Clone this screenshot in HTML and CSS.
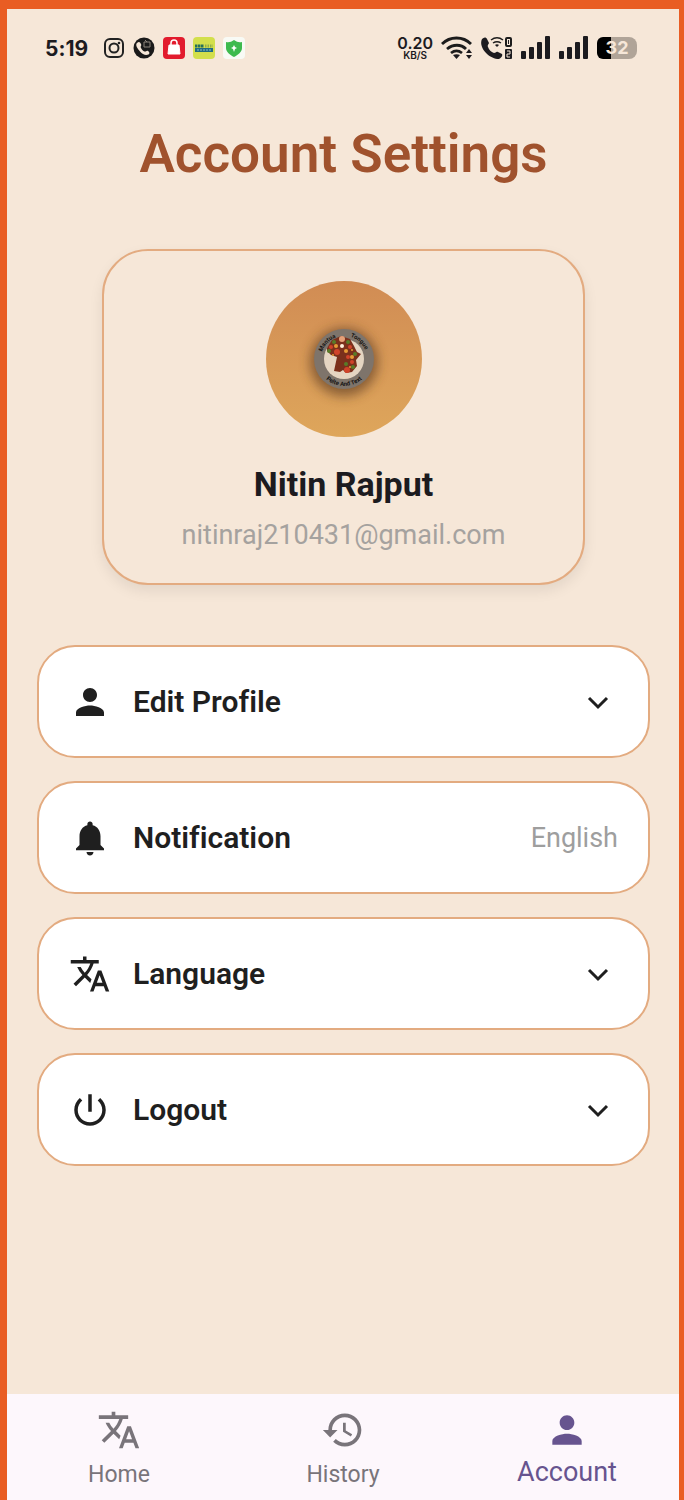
FILE: index.html
```html
<!DOCTYPE html>
<html lang="en">
<head>
    <meta charset="UTF-8">
    <meta name="viewport" content="width=device-width, initial-scale=1.0">
    <title>Account Settings</title>
    <link rel="stylesheet" href="styles.css">
</head>
<body>

<!-- shared icons -->
<svg class="sprite" aria-hidden="true">
    <symbol id="icon-person" viewBox="0 0 24 24">
        <path d="M12 12c2.210 0 4-1.790 4-4s-1.790-4-4-4-4 1.790-4 4 1.790 4 4 4zm0 2c-2.670 0-8 1.340-8 4v2h16v-2c0-2.660-5.330-4-8-4z"/>
    </symbol>
    <symbol id="icon-bell" viewBox="0 0 24 24">
        <path d="M12 22c1.100 0 2-.9 2-2h-4c0 1.100.89 2 2 2zm6-6v-5c0-3.070-1.640-5.640-4.500-6.320V4c0-.83-.67-1.500-1.500-1.500s-1.500.67-1.500 1.500v.68C7.630 5.360 6 7.920 6 11v5l-2 2v1h16v-1l-2-2z"/>
    </symbol>
    <symbol id="icon-translate" viewBox="0 0 24 24">
        <path d="M12.870 15.070l-2.540-2.510.03-.03c1.740-1.940 2.980-4.170 3.710-6.530H17V4h-7V2H8v2H1v1.990h11.170C11.500 7.920 10.440 9.750 9 11.350 8.070 10.320 7.300 9.190 6.690 8h-2c.73 1.630 1.730 3.170 2.980 4.560l-5.090 5.020L4 19l5-5 3.110 3.110.76-2.040zM18.500 10h-2L12 22h2l1.120-3h4.750L21 22h2l-4.500-12zm-2.620 7l1.620-4.330L19.120 17h-3.240z"/>
    </symbol>
    <symbol id="icon-power" viewBox="0 0 24 24">
        <path d="M13 3h-2v10h2V3zm4.830 2.170l-1.420 1.420C17.990 7.860 19 9.810 19 12c0 3.870-3.130 7-7 7s-7-3.130-7-7c0-2.190 1.010-4.140 2.580-5.420L6.170 5.170C4.230 6.820 3 9.260 3 12c0 4.970 4.030 9 9 9s9-4.030 9-9c0-2.740-1.230-5.180-3.170-6.830z"/>
    </symbol>
    <symbol id="icon-history" viewBox="0 0 24 24">
        <path d="M13 3c-4.970 0-9 4.030-9 9H1l3.890 3.890.07.14L9 12H6c0-3.870 3.130-7 7-7s7 3.130 7 7-3.130 7-7 7c-1.930 0-3.680-.79-4.940-2.060l-1.420 1.420C8.270 19.990 10.510 21 13 21c4.970 0 9-4.030 9-9s-4.030-9-9-9zm-1 5v5l4.280 2.540.72-1.210-3.500-2.080V8H12z"/>
    </symbol>
    <symbol id="icon-chevron" viewBox="0 0 24 24">
        <path d="M3 8l9 9 9-9" fill="none" stroke="currentColor" stroke-width="3"/>
    </symbol>
    <symbol id="icon-signal" viewBox="0 0 30 24">
        <rect x="0" y="15" width="5" height="8" rx="1"/>
        <rect x="8" y="11" width="5" height="12" rx="1"/>
        <rect x="16" y="6" width="5" height="17" rx="1"/>
        <rect x="24" y="0" width="5" height="23" rx="1"/>
    </symbol>
</svg>

<div class="app">
    <header class="status-bar">
        <div class="status-left">
            <span class="clock">5:19</span>
            <svg class="app-icon" viewBox="0 0 24 24" aria-hidden="true">
                <rect x="3" y="3" width="18" height="18" rx="5" fill="none" stroke="#222" stroke-width="2"/>
                <circle cx="12" cy="12" r="4.500" fill="none" stroke="#222" stroke-width="2"/>
                <circle cx="17" cy="7" r="1.300" fill="#222"/>
            </svg>
            <svg class="app-icon" viewBox="0 0 24 24" aria-hidden="true">
                <circle cx="12" cy="12" r="10.500" fill="#1a1a1a"/>
                <path d="M5 7c2-2 3-1 4 1s-1 2 0 4 2 3 3.500 3.500 2-1.500 3.500-.5 2 2.500.5 3.500c-3 1-6 0-8.500-3S3 9 5 7z" fill="#f6e7d8"/>
                <path d="M12 6h6v5h-6zM13 4l2 2" fill="none" stroke="#8d857c"/>
            </svg>
            <svg class="app-icon" viewBox="0 0 24 24" aria-hidden="true">
                <rect x="1" y="1" width="22" height="22" rx="4" fill="#e21b2d"/>
                <path d="M7 9h10l1 9H6z" fill="#fff" stroke="#fff" stroke-linejoin="round"/>
                <path d="M9 10V7c0-4 6-4 6 0v3" fill="none" stroke="#fff" stroke-width="1.500"/>
            </svg>
            <svg class="app-icon" viewBox="0 0 24 24" aria-hidden="true">
                <rect x="1" y="1" width="22" height="22" rx="4" fill="#d3df4c"/>
                <path d="M3 10h9" stroke="#27705a" stroke-width="3" stroke-dasharray="2.500 .5"/>
                <path d="M13 10h8" stroke="#91ad4b" stroke-width="3" stroke-dasharray="1.500 1"/>
                <rect x="3" y="12" width="18" height="4" fill="#206b82"/>
                <path d="M5 14h14" stroke="#8dbec0" stroke-dasharray="2 1"/>
            </svg>
            <svg class="app-icon" viewBox="0 0 24 24" aria-hidden="true">
                <rect x="1" y="1" width="22" height="22" rx="4" fill="#f8faf5"/>
                <path d="M12 4q4 3 8 2v6c0 4-4 7-8 9-4-2-8-5-8-9V6q4 1 8-2z" fill="#3dba4e"/>
                <path d="M12 9l1 2 2 1-2 1-1 3-1-3-2-1 2-1z" fill="#fff"/>
            </svg>
        </div>
        <div class="status-right">
            <span class="speed"><span class="speed-value">0.20</span><span class="speed-unit">KB/S</span></span>
            <svg class="wifi" viewBox="0 0 32 24" aria-hidden="true">
                <g fill="none" stroke="#1c1c1c" stroke-width="2.800">
                    <path d="M1 8c8-8 21-8 29 0M6 13c6-5 14-5 19 0M10 17c4-3 7-3 11 0"/>
                </g>
                <path d="M12 19c2-1 5-1 7 0l-3.500 4z"/>
                <path d="M25 17l3-4 3 4zM25 19h6l-3 4z"/>
            </svg>
            <svg class="call" viewBox="0 0 32 24" aria-hidden="true">
                <path d="M1 3c2-2 4-2 5 0l2 4c0 1-2 2-1 4 1 3 3 5 6 6 2 0 2-2 4-1l4 2c1 2-1 4-3 5C8 23-3 11 1 3z"/>
                <g fill="none" stroke="#1c1c1c" stroke-width="1.500">
                    <path d="M10 4c4-3 8-3 12 0M12 7c3-2 5-2 8 0"/>
                    <rect x="25" y="2" width="5" height="8" rx="1" stroke-width="2"/>
                </g>
                <path d="M27 4h1v4h-1zM14 9c1-1 3-1 4 0l-2 2z"/>
                <rect x="24" y="13" width="7" height="10" rx="1"/>
                <path d="M26 15h3v3h-3v3h3" fill="none" stroke="#f6e7d8"/>
            </svg>
            <svg class="signal" aria-hidden="true"><use href="#icon-signal"/></svg>
            <svg class="signal" aria-hidden="true"><use href="#icon-signal"/></svg>
            <span class="battery">32</span>
        </div>
    </header>

    <main class="content">
        <h1 class="page-title">Account Settings</h1>

        <section class="profile-card">
            <svg class="avatar" viewBox="0 0 156 156" role="img" aria-label="Profile picture">
                <defs>
                    <linearGradient id="avatarBg" x1="0" y1="0" x2="0" y2="1">
                        <stop offset="0" stop-color="#d18c54"/>
                        <stop offset="1" stop-color="#dea65b"/>
                    </linearGradient>
                    <filter id="badgeShadow" x="-50%" y="-50%" width="200%" height="200%">
                        <feGaussianBlur stdDeviation="6"/>
                    </filter>
                    <path id="arcTop" d="M55 78a23 23 0 0 1 46 0"/>
                    <path id="arcBottom" d="M51 78a27 27 0 0 0 54 0"/>
                </defs>
                <circle cx="78" cy="78" r="78" fill="url(#avatarBg)"/>
                <circle cx="78" cy="81" r="34" fill="#5b3b20" opacity=".65" filter="url(#badgeShadow)"/>
                <circle cx="78" cy="78" r="30" fill="#7e746b"/>
                <circle cx="78" cy="78" r="20" fill="#e5d5c2"/>
                <g class="badge-text">
                    <text><textPath href="#arcTop" startOffset="10%">Mantua</textPath></text>
                    <text><textPath href="#arcTop" startOffset="59%">Tongue</textPath></text>
                    <text text-anchor="middle"><textPath href="#arcBottom" startOffset="50%">Pelte And Text</textPath></text>
                </g>
                <path d="M61 67l5-8 9-4 9 3 4 7 3 6 4 2-5 6 1 6-5 6-6 1-3-3-3 2-6-1 3-14-6-2-4-4z" fill="#7b301c"/>
                <g fill="#d0432a">
                    <circle cx="65" cy="66" r="2"/><circle cx="71" cy="71" r="3"/><circle cx="84" cy="66" r="2"/>
                    <circle cx="86" cy="81" r="2"/><circle cx="81" cy="89" r="3"/><circle cx="82" cy="76" r="2"/>
                </g>
                <g fill="#587c28">
                    <circle cx="63" cy="70" r="2"/><circle cx="68" cy="61" r="2"/><circle cx="89" cy="73" r="2"/>
                    <circle cx="87" cy="86" r="2"/><circle cx="80" cy="83" r="2"/><circle cx="82" cy="61" r="2"/>
                </g>
                <g fill="#e69b36">
                    <circle cx="70" cy="65" r="2"/><circle cx="80" cy="70" r="2"/><circle cx="86" cy="76" r="2"/>
                    <circle cx="84" cy="86" r="1"/><circle cx="67" cy="74" r="1"/><circle cx="86" cy="69" r="1"/>
                </g>
                <circle cx="76" cy="58" r="3" fill="#e6a078"/>
                <circle cx="76" cy="65" r="2" fill="#fff0dc"/>
            </svg>
            <h2 class="profile-name">Nitin Rajput</h2>
            <p class="profile-email">nitinraj210431@gmail.com</p>
        </section>

        <div class="settings">
            <button type="button" class="setting">
                <svg class="setting-icon" aria-hidden="true"><use href="#icon-person"/></svg>
                <span class="setting-label">Edit Profile</span>
                <svg class="chevron" aria-hidden="true"><use href="#icon-chevron"/></svg>
            </button>
            <button type="button" class="setting">
                <svg class="setting-icon" aria-hidden="true"><use href="#icon-bell"/></svg>
                <span class="setting-label">Notification</span>
                <span class="setting-value">English</span>
            </button>
            <button type="button" class="setting">
                <svg class="setting-icon" aria-hidden="true"><use href="#icon-translate"/></svg>
                <span class="setting-label">Language</span>
                <svg class="chevron" aria-hidden="true"><use href="#icon-chevron"/></svg>
            </button>
            <button type="button" class="setting">
                <svg class="setting-icon" aria-hidden="true"><use href="#icon-power"/></svg>
                <span class="setting-label">Logout</span>
                <svg class="chevron" aria-hidden="true"><use href="#icon-chevron"/></svg>
            </button>
        </div>
    </main>

    <nav class="bottom-nav">
        <a href="#home" class="nav-item">
            <svg class="nav-icon" aria-hidden="true"><use href="#icon-translate"/></svg>
            <span>Home</span>
        </a>
        <a href="#history" class="nav-item">
            <svg class="nav-icon" aria-hidden="true"><use href="#icon-history"/></svg>
            <span>History</span>
        </a>
        <a href="#account" class="nav-item active" aria-current="page">
            <svg class="nav-icon" aria-hidden="true"><use href="#icon-person"/></svg>
            <span>Account</span>
        </a>
    </nav>
</div>

</body>
</html>
```
FILE: styles.css
```css
* {
    box-sizing: border-box;
}
body {
    margin: 0;
    font-family: Roboto, Arial, sans-serif;
    font-variant-ligatures: none;
    color: #1c1b1f;
    background-color: #e95d23;
}
svg {
    fill: currentColor;
    flex-shrink: 0;
}
.sprite {
    display: none;
}
.app {
    display: flex;
    flex-direction: column;
    min-height: 100vh;
    border: solid #e95d23;
    border-width: 9px 5px 0 7px;
    background-color: #f6e7d8;
}

/* status bar */
.status-bar {
    display: flex;
    justify-content: space-between;
    align-items: center;
    height: 78px;
    padding: 0 42px 0 38px;
}
.status-left,
.status-right {
    display: flex;
    align-items: center;
}
.status-left {
    gap: 6px;
}
.status-right {
    gap: 8px;
}
.clock {
    margin-right: 8px;
    font-family: Inter, Arial, sans-serif;
    font-size: 21px;
    font-weight: 700;
}
.app-icon {
    width: 24px;
    height: 24px;
}
.speed {
    display: flex;
    flex-direction: column;
    align-items: center;
    font-family: Inter, Arial, sans-serif;
    font-weight: 600;
}
.speed-value {
    font-size: 16px;
    line-height: 14px;
}
.speed-unit {
    font-size: 10px;
    line-height: 10px;
}
.wifi,
.call {
    width: 32px;
    height: 24px;
}
.signal {
    width: 30px;
    height: 24px;
}
.battery {
    width: 40px;
    height: 22px;
    border-radius: 6px 8px 8px 6px;
    background: linear-gradient(90deg, #000 36%, #b0a498 36%);
    color: #f6e7d8;
    font-family: Inter, Arial, sans-serif;
    font-size: 18px;
    font-weight: 700;
    line-height: 22px;
    text-align: center;
}

/* content */
.content {
    padding: 36px 29px 40px 30px;
}
.page-title {
    margin: 0;
    color: #a0522d;
    font-size: 53px;
    font-weight: 600;
    line-height: 62px;
    text-align: center;
}
.profile-card {
    display: flex;
    flex-direction: column;
    align-items: center;
    margin: 64px 65px 60px;
    padding: 30px 20px 30px;
    border: 2px solid #e3ab80;
    border-radius: 46px;
    background-color: #f6e7d8;
    box-shadow: 0 6px 14px rgba(0, 0, 0, 0.08);
}
.avatar {
    width: 156px;
    height: 156px;
}
.badge-text {
    fill: #171513;
    font-size: 6px;
    font-weight: 700;
}
.profile-name {
    margin: 26px 0 12px;
    font-size: 34px;
    font-weight: 700;
    line-height: 42px;
}
.profile-email {
    margin: 0;
    color: #a5a29f;
    font-size: 27px;
    line-height: 36px;
}
.settings {
    display: flex;
    flex-direction: column;
    gap: 23px;
}
.setting {
    display: flex;
    align-items: center;
    width: 100%;
    height: 113px;
    padding: 0 30px;
    border: 2px solid #e3ab80;
    border-radius: 38px;
    background-color: #fff;
    color: #1f1f1f;
    font-family: inherit;
    text-align: left;
    cursor: pointer;
}
.setting-icon {
    width: 42px;
    height: 42px;
}
.setting-label {
    flex: 1;
    margin-left: 22px;
    font-size: 30px;
    font-weight: 600;
    font-variant-ligatures: none;
}
.setting-value {
    color: #9e9e9e;
    font-size: 27px;
}
.chevron {
    width: 24px;
    height: 24px;
    margin-right: 8px;
}

/* bottom navigation */
.bottom-nav {
    display: flex;
    height: 106px;
    margin-top: auto;
    background-color: #fdf7fc;
}
.nav-item {
    display: flex;
    flex: 1;
    flex-direction: column;
    align-items: center;
    gap: 8px;
    padding-top: 14px;
    color: #79747a;
    font-size: 23px;
    line-height: 30px;
    text-decoration: none;
}
.nav-item.active {
    gap: 5px;
    color: #67548f;
    font-size: 27px;
}
.nav-icon {
    width: 44px;
    height: 44px;
}
```
